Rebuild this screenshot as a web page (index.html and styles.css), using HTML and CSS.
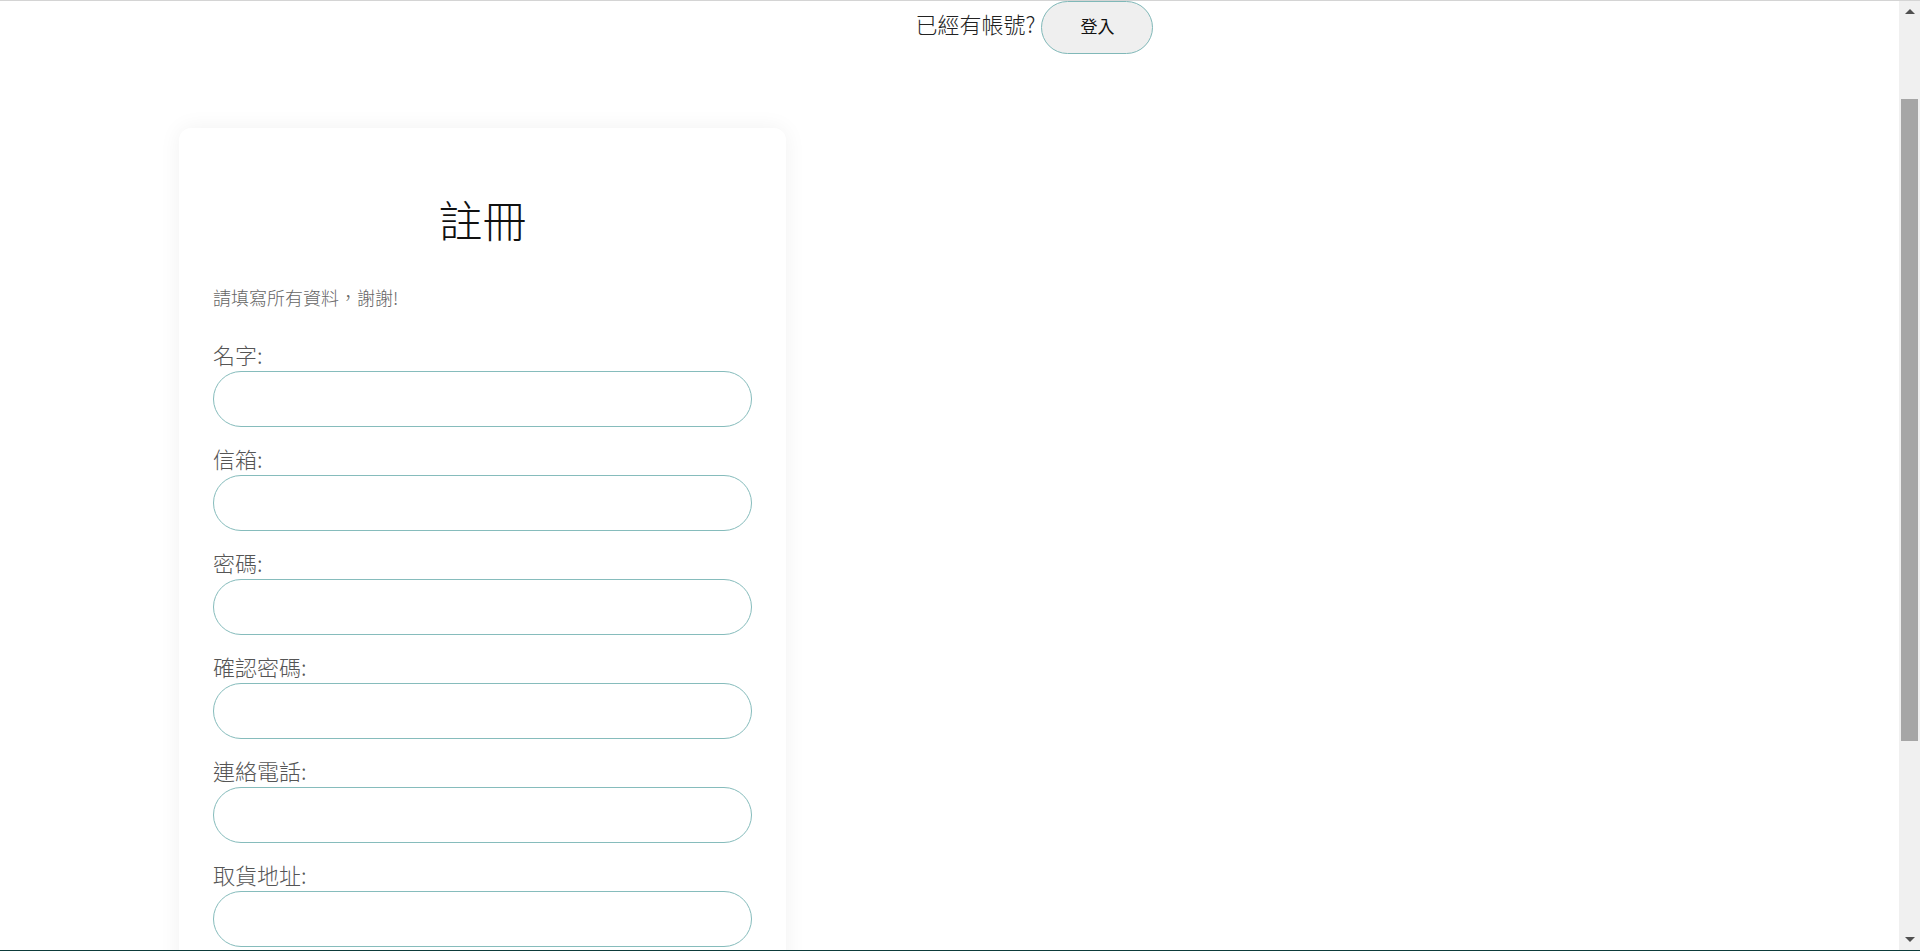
FILE: index.html
```html
<!DOCTYPE html>
<html lang="zh-Hant">
<head>
<meta charset="utf-8">
<title>註冊</title>
<link rel="stylesheet" href="styles.css">
</head>
<body>
<header class="topbar">
  <span class="topbar-text">已經有帳號?</span>
  <button class="login-btn" type="button">登入</button>
</header>
<main class="page">
  <section class="card">
    <form class="form">
      <h1 class="title">註冊</h1>
      <p class="hint">請填寫所有資料，謝謝!</p>
      <div class="field">
        <label class="label" for="name">名字:</label>
        <input class="input" id="name" type="text">
      </div>
      <div class="field">
        <label class="label" for="email">信箱:</label>
        <input class="input" id="email" type="email">
      </div>
      <div class="field">
        <label class="label" for="pw">密碼:</label>
        <input class="input" id="pw" type="password">
      </div>
      <div class="field">
        <label class="label" for="pw2">確認密碼:</label>
        <input class="input" id="pw2" type="password">
      </div>
      <div class="field">
        <label class="label" for="tel">連絡電話:</label>
        <input class="input" id="tel" type="tel">
      </div>
      <div class="field">
        <label class="label" for="addr">取貨地址:</label>
        <input class="input" id="addr" type="text">
      </div>
    </form>
  </section>
</main>
<div class="fake-scrollbar" aria-hidden="true">
  <span class="sb-arrow sb-up"></span>
  <span class="sb-thumb"></span>
  <span class="sb-arrow sb-down"></span>
</div>
<div class="edge-bottom" aria-hidden="true"></div>
</body>
</html>
```
FILE: styles.css
```css
html, body {
  margin: 0;
  padding: 0;
  background: #ffffff;
}

body {
  font-family: "Noto Sans CJK TC", "Noto Sans", "Liberation Sans", sans-serif;
  color: #333;
}

.topbar {
  display: flex;
  justify-content: center;
  align-items: baseline;
  gap: 6px;
  padding-left: 149px;
  border-top: 1px solid #d4d4d4;
}

.topbar-text {
  font-size: 22px;
  font-weight: 300;
  color: #222;
}

.login-btn {
  height: 53px;
  padding: 0 38px 4px;
  border: 1px solid #80b8b8;
  border-radius: 27px;
  background: #efefef;
  font-family: "Noto Sans CJK TC", "Noto Sans", sans-serif;
  font-size: 17px;
  color: #111;
}

.page {
  padding: 74px 0 0 179px;
}

.card {
  box-sizing: border-box;
  width: 607px;
  padding: 61px 34px 60px;
  background: #fff;
  border-radius: 12px;
  box-shadow: 0 0 22px rgba(0, 0, 0, 0.06);
}

.form {
  display: flex;
  flex-direction: column;
}

.title {
  margin: 0;
  font-size: 44px;
  line-height: 60px;
  font-weight: 300;
  text-align: center;
  color: #111;
}

.hint {
  margin: 35px 0 29px;
  font-size: 18px;
  line-height: 26px;
  font-weight: 300;
  color: #666;
}

.field {
  display: flex;
  flex-direction: column;
  gap: 2px;
  margin-bottom: 16px;
}

.label {
  font-size: 22px;
  line-height: 30px;
  font-weight: 300;
  color: #555;
}

.input {
  box-sizing: border-box;
  width: 100%;
  height: 56px;
  padding: 0 22px;
  border: 1px solid #86bcbc;
  border-radius: 28px;
  background: #fff;
  font-size: 18px;
  outline: none;
}

.fake-scrollbar {
  position: fixed;
  top: 0;
  right: 0;
  bottom: 0;
  width: 21px;
  background: #f0f0f0;
  border-top: 1px solid #d4d4d4;
  box-sizing: border-box;
}

.sb-arrow {
  position: absolute;
  left: 6px;
  width: 0;
  height: 0;
  border-left: 5px solid transparent;
  border-right: 5px solid transparent;
}

.sb-up {
  top: 8px;
  border-bottom: 5px solid #505050;
}

.sb-down {
  bottom: 9px;
  border-top: 5px solid #505050;
}

.sb-thumb {
  position: absolute;
  top: 98px;
  left: 2px;
  right: 2px;
  height: 642px;
  background: #a6a6a6;
}

.edge-bottom {
  position: fixed;
  left: 0;
  right: 0;
  bottom: 0;
  height: 1px;
  background: #0d3b3a;
  z-index: 5;
}
```
